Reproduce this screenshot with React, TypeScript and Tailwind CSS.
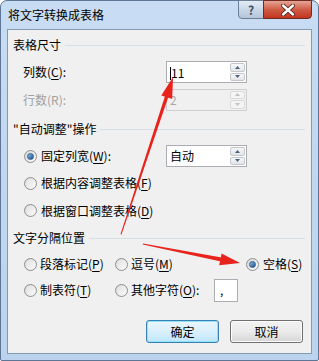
import React from 'react'

const FONT = "font-['Noto_Sans_CJK_SC','Noto_Sans',sans-serif]"

function Radio({ checked = false }: { checked?: boolean }) {
  return (
    <span className="flex h-[13px] w-[13px] shrink-0 items-center justify-center rounded-full border border-[#8e8f8f] bg-gradient-to-br from-[#d6d6d6] to-[#fdfdfd]">
      <span
        className={
          checked
            ? 'h-[7px] w-[7px] rounded-full border border-[#2c5f8f] bg-gradient-to-br from-[#8ec1ec] to-[#1b4f84]'
            : 'h-[9px] w-[9px] rounded-full bg-gradient-to-br from-[#e2e2e2] to-[#f8f8f8]'
        }
      />
    </span>
  )
}

function Acc({ k }: { k: string }) {
  return <span className="underline underline-offset-2">{k}</span>
}

function Spin({ value, disabled = false, caret = false }: { value: string; disabled?: boolean; caret?: boolean }) {
  return (
    <div
      className={
        'flex h-[22px] w-[81px] items-center border ' +
        (disabled ? 'border-[#cfcfcf] bg-[#f0f0f0] text-[#a8a8a8]' : 'border-[#abadb3] bg-white text-black')
      }
    >
      <span className="flex-1 pl-[3px] text-[12px] leading-none">
        {caret && <span className="inline-block h-[13px] w-px translate-y-[2px] bg-black" />}
        {value}
      </span>
      <div className="mr-px flex h-[18px] w-[15px] flex-col gap-px">
        {['up', 'down'].map(d => (
          <div
            key={d}
            className={
              'flex flex-1 items-center justify-center rounded-[2px] border ' +
              (disabled ? 'border-[#dadada] bg-[#f4f4f4]' : 'border-[#c3c7cc] bg-gradient-to-b from-[#f7f7f7] to-[#e3e5e8]')
            }
          >
            <svg width="5" height="3" viewBox="0 0 5 3">
              <path
                d={d === 'up' ? 'M0 3 L2.5 0 L5 3 Z' : 'M0 0 L2.5 3 L5 0 Z'}
                fill={disabled ? '#c0c0c0' : '#4d6185'}
              />
            </svg>
          </div>
        ))}
      </div>
    </div>
  )
}

function Header({ title, h }: { title: string; h: string }) {
  return (
    <div className={`flex items-center pl-[5px] pr-[6px] ${h}`}>
      <span className="text-[12px] leading-none">{title}</span>
      <span className="ml-[4px] h-px flex-1 bg-[#d5dfe5]" />
    </div>
  )
}

export default function App() {
  return (
    <div className={`relative h-[361px] w-[319px] overflow-hidden bg-white ${FONT} text-black`}>
      <div className="flex h-full w-full flex-col rounded-t-[7px] rounded-b-[2px] border border-[#5d7695] bg-gradient-to-b from-[#c8dcf3] via-[#c2d7ef] to-[#bcd3ed] px-[6px] pb-[6px]">
        {/* title bar */}
        <div className="flex h-[28px] items-start">
          <span className="flex-1 pl-[1px] pt-[6px] text-[12px] leading-[16px]">将文字转换成表格</span>
          <div className="-mt-px flex">
            <div className="flex h-[19px] w-[26px] items-center justify-center rounded-bl-[4px] border border-[#6d7f94] bg-gradient-to-b from-[#e3ecf6] via-[#c9d7e6] to-[#b5c6d9] text-[12px] font-bold leading-none text-[#3e4d60]">
              ?
            </div>
            <div className="-ml-px flex h-[19px] w-[49px] items-center justify-center rounded-br-[4px] border border-[#6e2b22] bg-gradient-to-b from-[#e5a597] via-[#cf5b45] to-[#c2341d]">
              <svg width="14" height="12" viewBox="0 0 14 12">
                <path d="M2 1.5 L12 10.5 M12 1.5 L2 10.5" stroke="#4a1a12" strokeWidth="4" strokeLinecap="round" />
                <path d="M2 1.5 L12 10.5 M12 1.5 L2 10.5" stroke="#ffffff" strokeWidth="2.4" strokeLinecap="round" />
              </svg>
            </div>
          </div>
        </div>

        {/* client area */}
        <div className="flex flex-1 flex-col border border-[#8499b2] bg-[#f0f0f0] text-[12px]">
          <Header title="表格尺寸" h="h-[30px]" />
          <div className="flex h-[24px] items-center pl-[15px]">
            <span className="w-[143px] leading-none">
              列数(<Acc k="C" />):
            </span>
            <Spin value="11" caret />
          </div>
          <div className="flex h-[31px] items-center pl-[15px]">
            <span className="w-[143px] leading-none text-[#a0a0a0]">行数(R):</span>
            <Spin value="2" disabled />
          </div>

          <Header title={'"自动调整"操作'} h="h-[28px]" />
          <div className="flex h-[26px] items-center pl-[16px]">
            <div className="flex w-[142px] items-center gap-[4px]">
              <Radio checked />
              <span className="leading-none">
                固定列宽(<Acc k="W" />):
              </span>
            </div>
            <Spin value="自动" />
          </div>
          <div className="flex h-[28px] items-center gap-[4px] pl-[16px]">
            <Radio />
            <span className="leading-none">
              根据内容调整表格(<Acc k="F" />)
            </span>
          </div>
          <div className="flex h-[27px] items-center gap-[4px] pl-[16px]">
            <Radio />
            <span className="leading-none">
              根据窗口调整表格(<Acc k="D" />)
            </span>
          </div>

          <Header title="文字分隔位置" h="h-[28px]" />
          <div className="flex h-[24px] items-center pl-[16px]">
            <div className="flex w-[91px] items-center gap-[3px]">
              <Radio />
              <span className="leading-none">
                段落标记(<Acc k="P" />)
              </span>
            </div>
            <div className="flex w-[131px] items-center gap-[3px]">
              <Radio />
              <span className="leading-none">
                逗号(<Acc k="M" />)
              </span>
            </div>
            <div className="flex items-center gap-[4px]">
              <Radio checked />
              <span className="leading-none">
                空格(<Acc k="S" />)
              </span>
            </div>
          </div>
          <div className="flex h-[28px] items-center pl-[16px]">
            <div className="flex w-[91px] items-center gap-[3px]">
              <Radio />
              <span className="leading-none">
                制表符(<Acc k="T" />)
              </span>
            </div>
            <div className="flex items-center gap-[3px]">
              <Radio />
              <span className="w-[83px] leading-none">
                其他字符(<Acc k="O" />):
              </span>
            </div>
            <div className="flex h-[23px] w-[24px] items-center border border-[#abadb3] bg-white pl-[5px] leading-none">,</div>
          </div>

          <div className="mt-[16px] flex justify-end gap-[11px] pr-[8px]">
            <div className="flex h-[23px] w-[73px] items-center justify-center rounded-[3px] border border-[#3c7fb1] bg-gradient-to-b from-[#eaf6fd] via-[#d9f0fc] to-[#bee6fd] shadow-[inset_0_0_0_1px_#8ee3fd]">
              确定
            </div>
            <div className="flex h-[23px] w-[73px] items-center justify-center rounded-[3px] border border-[#707070] bg-gradient-to-b from-[#f2f2f2] via-[#ebebeb] to-[#d6d6d6] shadow-[inset_0_0_0_1px_#fcfcfc]">
              取消
            </div>
          </div>
        </div>
      </div>

      {/* annotation arrows */}
      <svg className="pointer-events-none absolute inset-0" width="319" height="361" viewBox="0 0 319 361">
        <polygon points="120.5,234.2 121.5,234.6 168.5,96.5 165.2,95.4" fill="#e8231c" />
        <polygon points="173,77 172.2,99 161.3,95.4" fill="#e8231c" />
        <polygon points="143,243.6 142.8,244.6 220.9,261.5 221.6,257.4" fill="#e8231c" />
        <polygon points="240,263 219.2,265.2 221.6,253.4" fill="#e8231c" />
      </svg>
    </div>
  )
}
